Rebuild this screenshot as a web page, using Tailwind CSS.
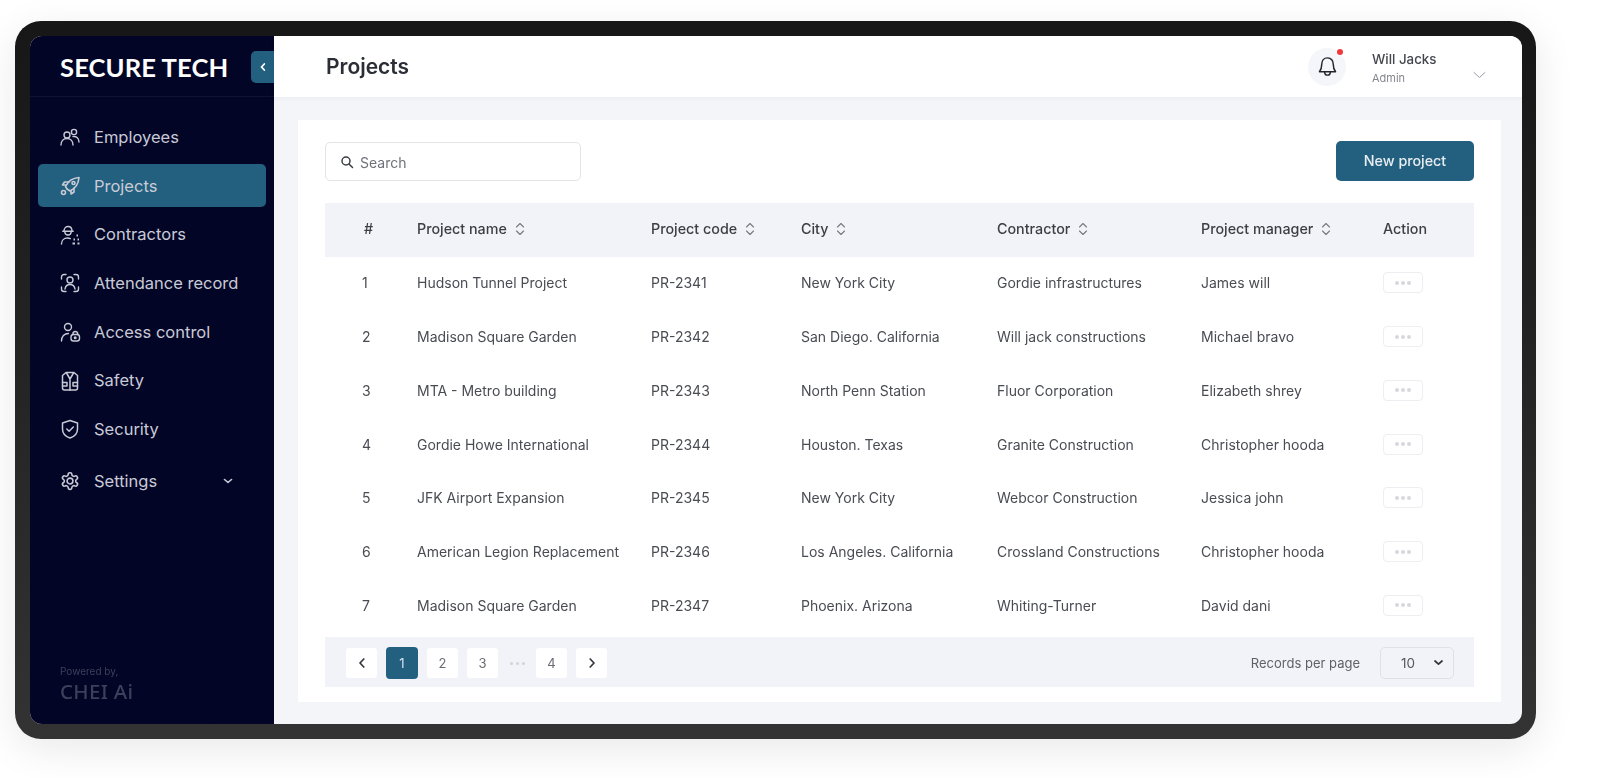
<!DOCTYPE html>
<html lang="en">
<head>
<meta charset="utf-8">
<title>Projects</title>
<script src="https://cdn.jsdelivr.net/npm/@tailwindcss/browser@4"></script>
</head>
<body class="bg-white font-['Inter','Noto_Sans',sans-serif] overflow-hidden">
<div class="w-[1600px] h-[778px] pt-[21px] pl-[15px] blur-[0.55px]">
  <div class="w-[1521px] h-[718px] rounded-[26px] bg-gradient-to-b from-[#171717] to-[#333333] pt-[15px] pb-[15px] pl-[15px] pr-[14px] shadow-[0_10px_40px_rgba(0,0,0,0.09)]">
    <div class="w-full h-full rounded-[12px] overflow-hidden flex bg-[#f4f5f9]">

      <aside class="w-[244px] shrink-0 bg-[#020526] flex flex-col text-[#c8cad6]">
        <div class="h-[61px] shrink-0 border-b border-white/5 flex items-center justify-between pl-[30px]">
          <span class="font-['Lato',sans-serif] font-bold text-[25.6px] tracking-[0.1px] text-white leading-none pt-[3px]">SECURE TECH</span>
          <span class="w-[23px] h-[32px] mt-[1px] bg-[#23607f] rounded-l-[5px] flex items-center justify-center">
            <svg width="10" height="10" viewBox="0 0 10 10" fill="none" stroke="#fff" stroke-width="1.8" stroke-linecap="round" stroke-linejoin="round"><path d="M6.300 2 3.500 5l2.800 3"/></svg>
          </span>
        </div>
        <nav class="flex flex-col pt-[16px] px-[8px] text-[16.5px]">
          <a class="h-[48.7px] flex items-center pl-[21px] gap-[13px]">
            <svg width="22" height="22" viewBox="0 0 22 22" fill="none" stroke="currentColor" stroke-width="1.4" stroke-linecap="round"><circle cx="8" cy="9" r="3"/><circle cx="15" cy="6" r="2.600"/><path d="M2 19c0-4 2.600-6.500 6-6.500s6 2.500 6 6.500"/><path d="M14 10.500c3.500-.5 6 1.800 6 5.500"/></svg>
            <span>Employees</span>
          </a>
          <a class="h-[43px] my-[2.8px] rounded-[5px] bg-[#23607f] flex items-center pl-[21px] gap-[13px]">
            <svg width="22" height="22" viewBox="0 0 22 22" fill="none" stroke="currentColor" stroke-width="1.6" stroke-linecap="round" stroke-linejoin="round"><path d="M8 14 6.500 11.500C9 6 14 3 20 2.500c-.5 6-3.500 11-9 13.500L8 14Z"/><circle cx="14.500" cy="8" r="1.500"/><path d="M7 10H3.500l2-3H10M12 15.500V19l3-2v-4"/><circle cx="4.500" cy="17.500" r="2"/></svg>
            <span>Projects</span>
          </a>
          <a class="h-[48.7px] flex items-center pl-[21px] gap-[13px]">
            <svg width="22" height="22" viewBox="0 0 22 22" fill="none" stroke="currentColor" stroke-width="1.4" stroke-linecap="round"><path d="M5 7c0-6 8-6 8 0"/><path d="M3.800 7.200h10.400"/><path d="M5.800 8c.3 4 6.100 4 6.400 0"/><path d="M2.500 20c0-3.500 2.500-6 6-6 1 0 2 .2 2.800.6"/><path d="M17.500 11.500h1.500M14.500 15.500h1.500M18.500 15.500H20M13.500 19.500H16M18.500 19.500H20.500" stroke-width="2.200" stroke-linecap="butt"/></svg>
            <span>Contractors</span>
          </a>
          <a class="h-[48.7px] flex items-center pl-[21px] gap-[13px]">
            <svg width="22" height="22" viewBox="0 0 22 22" fill="none" stroke="currentColor" stroke-width="1.4" stroke-linecap="round"><path d="M2.500 7V5a2.500 2.500 0 0 1 2.500-2.500h2M15 2.500h2A2.500 2.500 0 0 1 19.500 5v2M2.500 15v2A2.500 2.500 0 0 0 5 19.500h2M15 19.500h2a2.500 2.500 0 0 0 2.500-2.500v-2"/><circle cx="11" cy="8" r="3"/><path d="M6 17c.5-3 2.500-4.500 5-4.500s4.500 1.500 5 4.500"/></svg>
            <span>Attendance record</span>
          </a>
          <a class="h-[48.7px] flex items-center pl-[21px] gap-[13px]">
            <svg width="22" height="22" viewBox="0 0 22 22" fill="none" stroke="currentColor" stroke-width="1.4" stroke-linecap="round"><circle cx="9" cy="6" r="3.500"/><path d="M2.500 20c0-4.500 2.800-7.500 7-7.500"/><rect x="12" y="13.500" width="8.500" height="6.500" rx="2.500"/><path d="M13.800 13.500c0-4 5-4 5 0"/><circle cx="16.200" cy="16.700" r=".8"/></svg>
            <span>Access control</span>
          </a>
          <a class="h-[48.7px] flex items-center pl-[21px] gap-[13px]">
            <svg width="22" height="22" viewBox="0 0 22 22" fill="none" stroke="currentColor" stroke-width="1.5" stroke-linecap="round" stroke-linejoin="round"><path d="M7 2.500h8l3.500 3V18a2 2 0 0 1-2 2h-11a2 2 0 0 1-2-2V5.500L7 2.500Z"/><path d="m7.500 3 3.500 6 3.500-6M11 9v11M3.500 12.500H8v3.500H3.500M18.500 12.500H14v3.500h4.500"/></svg>
            <span>Safety</span>
          </a>
          <a class="h-[48.7px] flex items-center pl-[21px] gap-[13px]">
            <svg width="22" height="22" viewBox="0 0 22 22" fill="none" stroke="currentColor" stroke-width="1.5" stroke-linecap="round" stroke-linejoin="round"><path d="M11 2.500 18.500 5v6c0 4.500-3 7.500-7.500 9-4.500-1.500-7.500-4.500-7.500-9V5L11 2.500Z"/><path d="m7.800 11 2.300 2.300 4.200-4.300"/></svg>
            <span>Security</span>
          </a>
          <a class="h-[48.7px] mt-[3px] flex items-center pl-[21px] gap-[13px]">
            <svg width="22" height="22" viewBox="-1.2 -1.2 26.4 26.4" fill="none" stroke="currentColor" stroke-width="1.9" stroke-linejoin="round"><path d="M12.220 2h-.44a2 2 0 0 0-2 2v.18a2 2 0 0 1-1 1.730l-.43.25a2 2 0 0 1-2 0l-.15-.08a2 2 0 0 0-2.730.73l-.22.38a2 2 0 0 0 .73 2.730l.15.1a2 2 0 0 1 1 1.720v.51a2 2 0 0 1-1 1.740l-.15.09a2 2 0 0 0-.73 2.730l.22.38a2 2 0 0 0 2.730.73l.15-.08a2 2 0 0 1 2 0l.43.25a2 2 0 0 1 1 1.730V20a2 2 0 0 0 2 2h.44a2 2 0 0 0 2-2v-.18a2 2 0 0 1 1-1.730l.43-.25a2 2 0 0 1 2 0l.15.08a2 2 0 0 0 2.730-.73l.22-.39a2 2 0 0 0-.73-2.730l-.15-.08a2 2 0 0 1-1-1.740v-.5a2 2 0 0 1 1-1.740l.15-.09a2 2 0 0 0 .73-2.730l-.22-.38a2 2 0 0 0-2.730-.73l-.15.08a2 2 0 0 1-2 0l-.43-.25a2 2 0 0 1-1-1.730V4a2 2 0 0 0-2-2z"/><circle cx="12" cy="12" r="3.500"/></svg>
            <span class="flex-1">Settings</span>
            <svg class="mr-[32px]" width="12" height="12" viewBox="0 0 12 12" fill="none" stroke="currentColor" stroke-width="1.6" stroke-linecap="round" stroke-linejoin="round"><path d="m2.500 4.500 3.500 3 3.500-3"/></svg>
          </a>
        </nav>
        <div class="mt-auto pl-[30px] pb-[20px] text-[#3d405b]">
          <p class="text-[10px] leading-[13px]">Powered by,</p>
          <p class="font-['Noto_Sans',sans-serif] font-medium text-[20.5px] leading-[26px] tracking-[0.3px]">CHEI Ai</p>
        </div>
      </aside>

      <div class="flex-1 min-w-0 flex flex-col">
        <header class="h-[61px] shrink-0 bg-white shadow-[0_1px_6px_rgba(20,30,60,0.05)] flex items-center pl-[52px] relative">
          <h1 class="text-[21px] font-semibold text-[#2b2e36]">Projects</h1>
          <div class="ml-auto flex items-center">
            <span class="relative w-[38px] h-[38px] rounded-full bg-[#f5f6f9] flex items-center justify-center">
              <svg width="23" height="23" viewBox="0 0 20 20" fill="none" stroke="#22252e" stroke-width="1.3" stroke-linejoin="round" stroke-linecap="round"><path d="M10 2.500c-3.200 0-5 2.500-5 5.500 0 3-.8 5-2 6.500h14c-1.200-1.500-2-3.500-2-6.500 0-3-1.800-5.500-5-5.500Z"/><path d="M7.500 14.500c0 1.800 1 3 2.500 3s2.500-1.200 2.500-3"/></svg>
              <span class="absolute top-[1px] right-[3px] w-[6px] h-[6px] rounded-full bg-[#f0393c]"></span>
            </span>
            <div class="ml-[26px] w-[101px] pt-[3px]">
              <p class="text-[13.3px] font-medium text-[#45474e] leading-[17px]">Will Jacks</p>
              <p class="text-[11px] text-[#85878e] leading-[15px] mt-[3px]">Admin</p>
            </div>
            <svg class="mr-[36px] mt-[17px]" width="13" height="8" viewBox="0 0 13 8" fill="none" stroke="#9a9ca4" stroke-width="1" stroke-linecap="round"><path d="m1 1.500 5.500 5 5.500-5"/></svg>
          </div>
        </header>

        <main class="flex-1 min-h-0 pl-[24px] pr-[21px] pt-[23px] pb-[22px]">
          <section class="h-full bg-white px-[27px] pt-[21px]">
            <div class="flex items-center justify-between h-[40px]">
              <label class="w-[256px] h-[39px] border border-[#e3e4e8] rounded-[5px] flex items-center gap-[6px] pl-[14px] pt-[2px] text-[14px] text-[#70727a]">
                <svg width="14" height="14" viewBox="0 0 14 14" fill="none" stroke="#3c3e46" stroke-width="1.5" stroke-linecap="round"><circle cx="6" cy="6" r="4"/><path d="m9 9 3.500 3.500"/></svg>
                <span>Search</span>
              </label>
              <button class="w-[138px] h-[40px] bg-[#23607f] rounded-[5px] text-[14.3px] font-medium text-[#e8edf2]">New project</button>
            </div>

            <div class="mt-[22px] h-[54px] pb-[3px] bg-[#f2f3f8] grid grid-cols-[92px_234px_150px_196px_204px_182px_91px] items-center text-[14.3px] font-medium text-[#3c3e46]">
              <span class="pl-[39px]">#</span>
              <span class="flex items-center gap-[8px]">Project name <svg class="mt-[1px]" width="10" height="14" viewBox="0 0 10 14" fill="none" stroke="#77797f" stroke-width="1.1" stroke-linecap="round" stroke-linejoin="round"><path d="m1.500 5 3.500-3.500L8.500 5M1.500 9 5 12.500 8.500 9"/></svg></span>
              <span class="flex items-center gap-[8px]">Project code <svg class="mt-[1px]" width="10" height="14" viewBox="0 0 10 14" fill="none" stroke="#77797f" stroke-width="1.1" stroke-linecap="round" stroke-linejoin="round"><path d="m1.500 5 3.500-3.500L8.500 5M1.500 9 5 12.500 8.500 9"/></svg></span>
              <span class="flex items-center gap-[8px]">City <svg class="mt-[1px]" width="10" height="14" viewBox="0 0 10 14" fill="none" stroke="#77797f" stroke-width="1.1" stroke-linecap="round" stroke-linejoin="round"><path d="m1.500 5 3.500-3.500L8.500 5M1.500 9 5 12.500 8.500 9"/></svg></span>
              <span class="flex items-center gap-[8px]">Contractor <svg class="mt-[1px]" width="10" height="14" viewBox="0 0 10 14" fill="none" stroke="#77797f" stroke-width="1.1" stroke-linecap="round" stroke-linejoin="round"><path d="m1.500 5 3.500-3.500L8.500 5M1.500 9 5 12.500 8.500 9"/></svg></span>
              <span class="flex items-center gap-[8px]">Project manager <svg class="mt-[1px]" width="10" height="14" viewBox="0 0 10 14" fill="none" stroke="#77797f" stroke-width="1.1" stroke-linecap="round" stroke-linejoin="round"><path d="m1.500 5 3.500-3.500L8.500 5M1.500 9 5 12.500 8.500 9"/></svg></span>
              <span>Action</span>
            </div>

            <div class="text-[14px] text-[#4a4c54]">
              <div class="h-[53.75px] pb-[2px] grid grid-cols-[92px_234px_150px_196px_204px_182px_91px] items-center">
                <span class="pl-[37px]">1</span><span>Hudson Tunnel Project</span><span>PR-2341</span><span>New York City</span><span>Gordie infrastructures</span><span>James will</span>
                <span class="w-[40px] h-[21px] border border-[#eceef1] rounded-[4px] flex items-center justify-center gap-[2px]"><i class="w-[4px] h-[4px] rounded-full bg-[#d6d8dc]"></i><i class="w-[4px] h-[4px] rounded-full bg-[#d6d8dc]"></i><i class="w-[4px] h-[4px] rounded-full bg-[#d6d8dc]"></i></span>
              </div>
              <div class="h-[53.75px] pb-[2px] grid grid-cols-[92px_234px_150px_196px_204px_182px_91px] items-center">
                <span class="pl-[37px]">2</span><span>Madison Square Garden</span><span>PR-2342</span><span>San Diego. California</span><span>Will jack constructions</span><span>Michael bravo</span>
                <span class="w-[40px] h-[21px] border border-[#eceef1] rounded-[4px] flex items-center justify-center gap-[2px]"><i class="w-[4px] h-[4px] rounded-full bg-[#d6d8dc]"></i><i class="w-[4px] h-[4px] rounded-full bg-[#d6d8dc]"></i><i class="w-[4px] h-[4px] rounded-full bg-[#d6d8dc]"></i></span>
              </div>
              <div class="h-[53.75px] pb-[2px] grid grid-cols-[92px_234px_150px_196px_204px_182px_91px] items-center">
                <span class="pl-[37px]">3</span><span>MTA - Metro building</span><span>PR-2343</span><span>North Penn Station</span><span>Fluor Corporation</span><span>Elizabeth shrey</span>
                <span class="w-[40px] h-[21px] border border-[#eceef1] rounded-[4px] flex items-center justify-center gap-[2px]"><i class="w-[4px] h-[4px] rounded-full bg-[#d6d8dc]"></i><i class="w-[4px] h-[4px] rounded-full bg-[#d6d8dc]"></i><i class="w-[4px] h-[4px] rounded-full bg-[#d6d8dc]"></i></span>
              </div>
              <div class="h-[53.75px] pb-[2px] grid grid-cols-[92px_234px_150px_196px_204px_182px_91px] items-center">
                <span class="pl-[37px]">4</span><span>Gordie Howe International</span><span>PR-2344</span><span>Houston. Texas</span><span>Granite Construction</span><span>Christopher hooda</span>
                <span class="w-[40px] h-[21px] border border-[#eceef1] rounded-[4px] flex items-center justify-center gap-[2px]"><i class="w-[4px] h-[4px] rounded-full bg-[#d6d8dc]"></i><i class="w-[4px] h-[4px] rounded-full bg-[#d6d8dc]"></i><i class="w-[4px] h-[4px] rounded-full bg-[#d6d8dc]"></i></span>
              </div>
              <div class="h-[53.75px] pb-[2px] grid grid-cols-[92px_234px_150px_196px_204px_182px_91px] items-center">
                <span class="pl-[37px]">5</span><span>JFK Airport Expansion</span><span>PR-2345</span><span>New York City</span><span>Webcor Construction</span><span>Jessica john</span>
                <span class="w-[40px] h-[21px] border border-[#eceef1] rounded-[4px] flex items-center justify-center gap-[2px]"><i class="w-[4px] h-[4px] rounded-full bg-[#d6d8dc]"></i><i class="w-[4px] h-[4px] rounded-full bg-[#d6d8dc]"></i><i class="w-[4px] h-[4px] rounded-full bg-[#d6d8dc]"></i></span>
              </div>
              <div class="h-[53.75px] pb-[2px] grid grid-cols-[92px_234px_150px_196px_204px_182px_91px] items-center">
                <span class="pl-[37px]">6</span><span>American Legion Replacement</span><span>PR-2346</span><span>Los Angeles. California</span><span>Crossland Constructions</span><span>Christopher hooda</span>
                <span class="w-[40px] h-[21px] border border-[#eceef1] rounded-[4px] flex items-center justify-center gap-[2px]"><i class="w-[4px] h-[4px] rounded-full bg-[#d6d8dc]"></i><i class="w-[4px] h-[4px] rounded-full bg-[#d6d8dc]"></i><i class="w-[4px] h-[4px] rounded-full bg-[#d6d8dc]"></i></span>
              </div>
              <div class="h-[53.75px] pb-[2px] grid grid-cols-[92px_234px_150px_196px_204px_182px_91px] items-center">
                <span class="pl-[37px]">7</span><span>Madison Square Garden</span><span>PR-2347</span><span>Phoenix. Arizona</span><span>Whiting-Turner</span><span>David dani</span>
                <span class="w-[40px] h-[21px] border border-[#eceef1] rounded-[4px] flex items-center justify-center gap-[2px]"><i class="w-[4px] h-[4px] rounded-full bg-[#d6d8dc]"></i><i class="w-[4px] h-[4px] rounded-full bg-[#d6d8dc]"></i><i class="w-[4px] h-[4px] rounded-full bg-[#d6d8dc]"></i></span>
              </div>
            </div>

            <div class="mt-[4px] h-[50px] pt-[2px] bg-[#f2f3f8] flex items-center pl-[21px] pr-[20px]">
              <div class="flex items-center gap-[9px] text-[13px] text-[#6a6c73]">
                <span class="w-[31px] h-[30px] bg-white rounded-[3px] flex items-center justify-center"><svg width="10" height="12" viewBox="0 0 10 12" fill="none" stroke="#33353c" stroke-width="1.7" stroke-linecap="round" stroke-linejoin="round"><path d="M6.800 2 3 6l3.800 4"/></svg></span>
                <span class="w-[32px] h-[32px] bg-[#23607f] text-[#d5e2ea] rounded-[4px] flex items-center justify-center">1</span>
                <span class="w-[31px] h-[30px] bg-white rounded-[3px] flex items-center justify-center">2</span>
                <span class="w-[31px] h-[30px] bg-white rounded-[3px] flex items-center justify-center">3</span>
                <span class="w-[20px] flex items-center justify-center gap-[3px]"><i class="w-[3px] h-[3px] rounded-full bg-[#d2d4da]"></i><i class="w-[3px] h-[3px] rounded-full bg-[#d2d4da]"></i><i class="w-[3px] h-[3px] rounded-full bg-[#d2d4da]"></i></span>
                <span class="w-[31px] h-[30px] bg-white rounded-[3px] flex items-center justify-center">4</span>
                <span class="w-[31px] h-[30px] bg-white rounded-[3px] flex items-center justify-center"><svg width="10" height="12" viewBox="0 0 10 12" fill="none" stroke="#33353c" stroke-width="1.7" stroke-linecap="round" stroke-linejoin="round"><path d="M3.200 2 7 6l-3.800 4"/></svg></span>
              </div>
              <span class="ml-auto text-[13px] text-[#5f6168]">Records per page</span>
              <span class="ml-[20px] w-[74px] h-[32px] border border-[#dfe1e7] rounded-[5px] flex items-center pl-[20px] gap-[18px] text-[13.5px] text-[#55575e]">10
                <svg width="11" height="8" viewBox="0 0 11 8" fill="none" stroke="#33353c" stroke-width="1.7" stroke-linecap="round" stroke-linejoin="round"><path d="m2 2 3.500 3.200L9 2"/></svg>
              </span>
            </div>
          </section>
        </main>
      </div>
    </div>
  </div>
</div>
</body>
</html>
